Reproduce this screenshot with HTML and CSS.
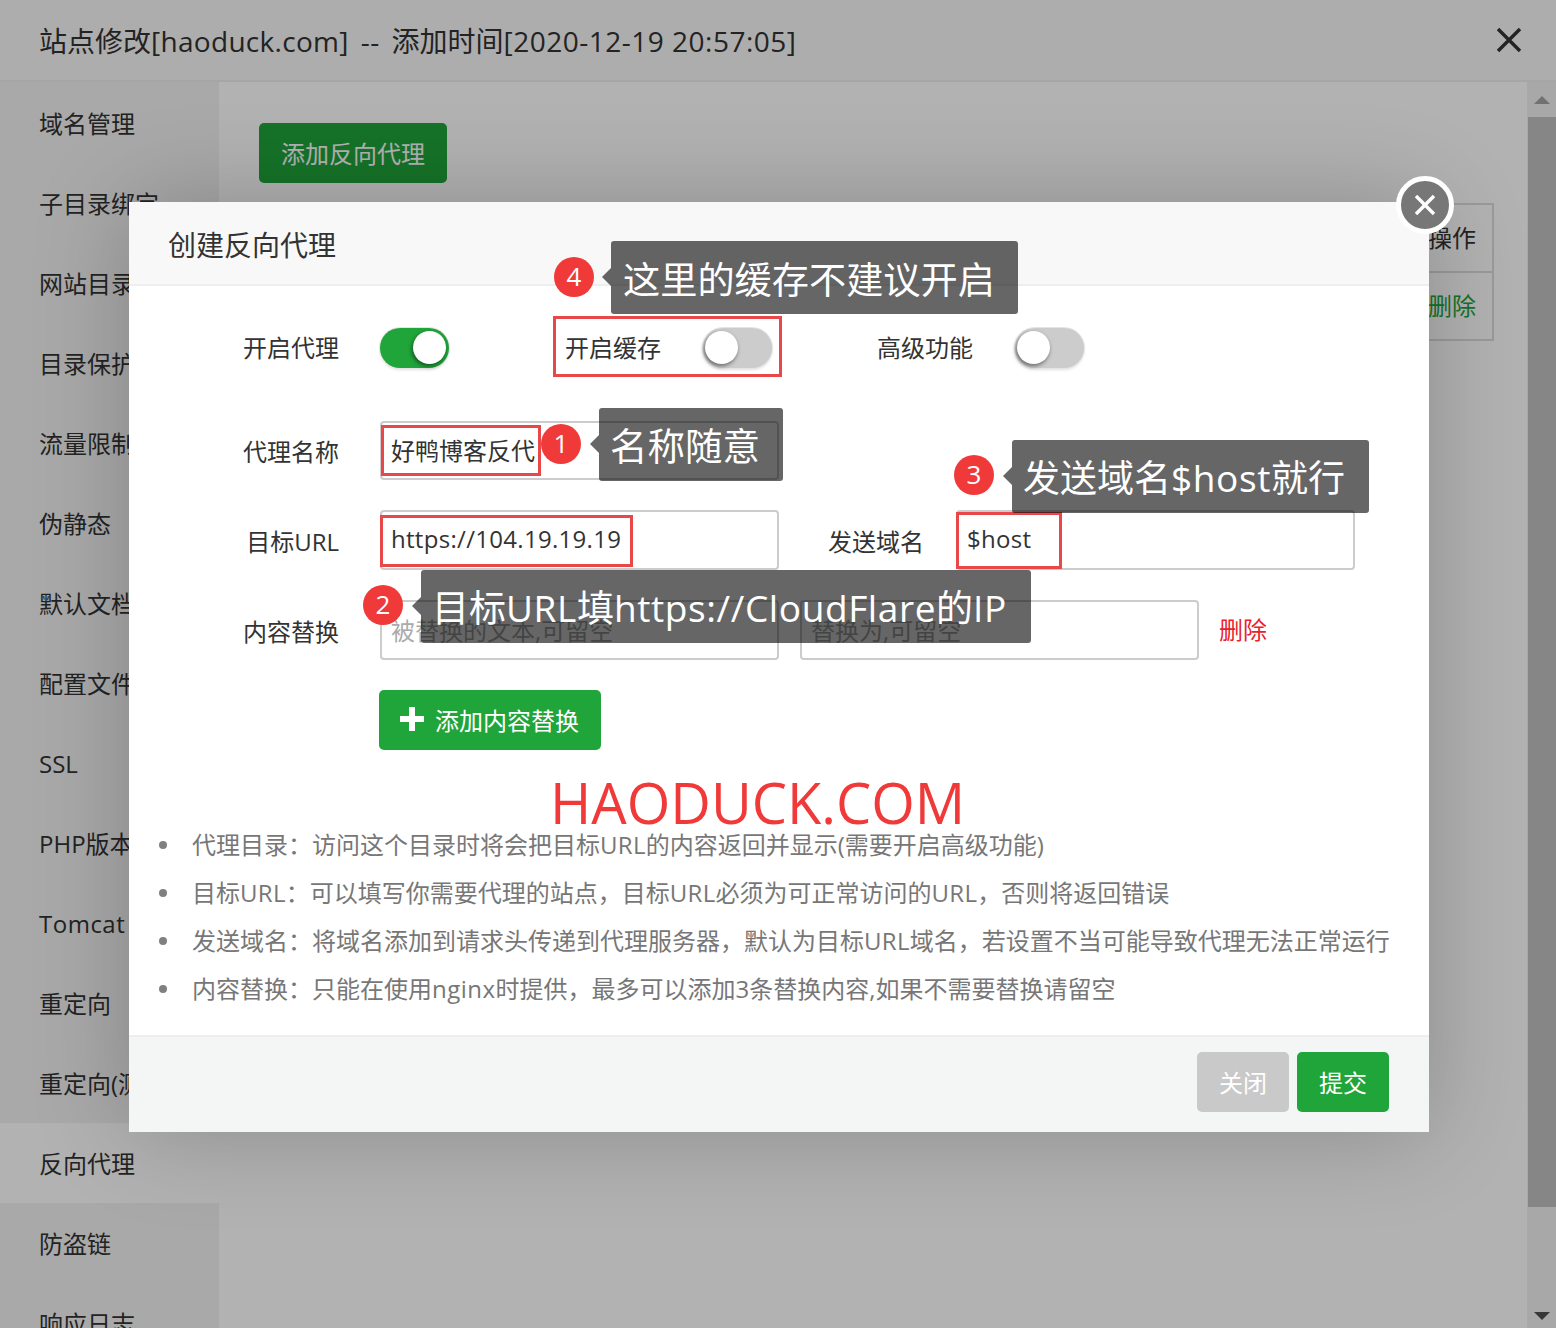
FILE: index.html
```html
<!DOCTYPE html>
<html lang="zh-CN">
<head>
    <meta charset="UTF-8">
    <title>创建反向代理</title>
    <link rel="stylesheet" href="styles.css">
</head>
<body>
    <div class="layer-title">
        <span>站点修改<span class="title-site">[haoduck.com] -- </span>添加时间<span class="latin-wide">[2020-12-19 20:57:05]</span></span>
        <svg class="layer-close" width="26" height="26" viewBox="0 0 26 26"><path d="M2 2 24 24M24 2 2 24" stroke="#333" stroke-width="3.4" fill="none"/></svg>
    </div>
    <div class="layer-body">
        <ul class="side-menu">
            <li>域名管理</li>
            <li>子目录绑定</li>
            <li>网站目录</li>
            <li>目录保护</li>
            <li>流量限制</li>
            <li>伪静态</li>
            <li>默认文档</li>
            <li>配置文件</li>
            <li>SSL</li>
            <li>PHP版本</li>
            <li class="latin-wide">Tomcat</li>
            <li>重定向</li>
            <li>重定向(测试)</li>
            <li class="on">反向代理</li>
            <li>防盗链</li>
            <li>响应日志</li>
        </ul>
        <div class="main">
            <button class="btn btn-green btn-add">添加反向代理</button>
            <table class="proxy-table">
                <tr><th>操作</th></tr>
                <tr><td class="link-green">删除</td></tr>
            </table>
        </div>
        <div class="scrollbar">
            <span class="arrow arrow-up"></span>
            <div class="thumb"></div>
            <span class="arrow arrow-down"></span>
        </div>
    </div>

    <div class="shade"></div>

    <div class="dialog">
        <div class="dialog-title">创建反向代理</div>
        <div class="dialog-content">
            <div class="row row-switches">
                <label class="row-label">开启代理</label>
                <span class="switch on"></span>
                <label class="label-cache">开启缓存</label>
                <span class="switch"></span>
                <label class="label-adv">高级功能</label>
                <span class="switch"></span>
            </div>
            <div class="row row-name">
                <label class="row-label">代理名称</label>
                <input class="txt txt-name" type="text" value="好鸭博客反代">
            </div>
            <div class="row">
                <label class="row-label">目标URL</label>
                <input class="txt latin" type="text" value="https://104.19.19.19">
                <label class="label-host">发送域名</label>
                <input class="txt latin" type="text" value="$host">
            </div>
            <div class="row">
                <label class="row-label">内容替换</label>
                <input class="txt txt-empty" type="text" placeholder="被替换的文本,可留空">
                <input class="txt txt-empty txt-second" type="text" placeholder="替换为,可留空">
                <a class="link-del">删除</a>
            </div>
            <div class="row">
                <button class="btn btn-green btn-plus">
                    <svg width="24" height="24" viewBox="0 0 24 24"><path d="M9 0h6v9h9v6h-9v9H9v-9H0V9h9z" fill="#fff"/></svg>
                    添加内容替换
                </button>
            </div>
            <ul class="help">
                <li>代理目录：访问这个目录时将会把目标<span class="latin">URL</span>的内容返回并显示(需要开启高级功能)</li>
                <li>目标<span class="latin">URL</span>：可以填写你需要代理的站点，目标<span class="latin">URL</span>必须为可正常访问的<span class="latin">URL</span>，否则将返回错误</li>
                <li>发送域名：将域名添加到请求头传递到代理服务器，默认为目标<span class="latin">URL</span>域名，若设置不当可能导致代理无法正常运行</li>
                <li>内容替换：只能在使用<span class="latin-wide">nginx</span>时提供，最多可以添加3条替换内容,如果不需要替换请留空</li>
            </ul>
        </div>
        <div class="dialog-foot">
            <button class="btn btn-gray">关闭</button>
            <button class="btn btn-green">提交</button>
        </div>
    </div>

    <div class="dialog-close">
        <svg width="22" height="22" viewBox="0 0 22 22"><path d="M2 2 20 20M20 2 2 20" stroke="#fff" stroke-width="3.4" fill="none"/></svg>
    </div>

    <!-- annotations drawn on top of the screenshot -->
    <div class="mark mark-cache"></div>
    <div class="mark mark-name"></div>
    <div class="mark mark-url"></div>
    <div class="mark mark-host"></div>

    <span class="badge badge-1">1</span>
    <span class="badge badge-2">2</span>
    <span class="badge badge-3">3</span>
    <span class="badge badge-4">4</span>

    <div class="tip tip-1">名称随意</div>
    <div class="tip tip-2">目标<span class="latin">URL</span>填<span class="latin">https://CloudFlare</span>的<span class="latin">IP</span></div>
    <div class="tip tip-3">发送域名<span class="latin">$host</span>就行</div>
    <div class="tip tip-4">这里的缓存不建议开启</div>

    <div class="watermark">HAODUCK.COM</div>
</body>
</html>
```

FILE: styles.css
```css
* {
    box-sizing: border-box;
}
html, body {
    height: 100%;
}
body {
    margin: 0;
    height: 1328px;
    overflow: hidden;
    position: relative;
    display: flex;
    flex-direction: column;
    background: #fff;
    color: #333;
    font-family: "Open Sans", "Noto Sans CJK SC", sans-serif;
    font-size: 24px;
}
ul {
    margin: 0;
    padding: 0;
    list-style: none;
}
.latin {
    letter-spacing: 0.3px;
}
.latin-wide {
    letter-spacing: 0.5px;
}
.layer-title {
    height: 82px;
    flex: none;
    display: flex;
    align-items: center;
    justify-content: space-between;
    padding: 0 34px 0 39px;
    background: #f8f8f8;
    border-bottom: 2px solid #eee;
    font-size: 28px;
}
.title-site {
    letter-spacing: 0.3px;
    word-spacing: 4.5px;
}
.layer-body {
    flex: 1;
    display: flex;
    min-height: 0;
}
.side-menu {
    width: 219px;
    flex: none;
    padding-top: 1px;
    background: #f2f2f2;
    overflow: hidden;
}
.side-menu li {
    height: 80px;
    line-height: 82px;
    padding-left: 39px;
    white-space: nowrap;
}
.side-menu li.on {
    background: #fff;
}
.main {
    flex: 1;
    padding: 41px 33px 0 40px;
    background: #fff;
}
.btn {
    height: 60px;
    padding: 0 21px 2px;
    border: none;
    border-radius: 5px;
    color: #fff;
    font: inherit;
}
.btn-green {
    background: #20a53a;
}
.btn-gray {
    background: #c9c9c9;
}
.btn-add {
    display: block;
    width: 188px;
    padding: 0 0 2px;
}
.proxy-table {
    width: 100%;
    margin-top: 20px;
    border-collapse: collapse;
    border: 2px solid #ddd;
}
.proxy-table th, .proxy-table td {
    height: 68px;
    padding: 0 16px 3px;
    text-align: right;
    font-weight: normal;
    border-bottom: 2px solid #ddd;
}
.link-green {
    color: #20a53a;
}
.scrollbar {
    width: 29px;
    flex: none;
    display: flex;
    flex-direction: column;
    align-items: center;
    background: #f1f1f1;
}
.thumb {
    width: 28px;
    height: 1090px;
    margin: 13px 0 0 1px;
    background: #c1c1c1;
}
.arrow {
    width: 0;
    height: 0;
    border-left: 8px solid transparent;
    border-right: 8px solid transparent;
}
.arrow-up {
    margin-top: 14px;
    border-bottom: 8px solid #a3a3a3;
}
.arrow-down {
    margin-top: 105px;
    border-top: 8px solid #505050;
}
.shade {
    position: absolute;
    inset: 0;
    background: rgba(0, 0, 0, 0.3);
}
.dialog {
    position: absolute;
    left: 129px;
    top: 202px;
    width: 1300px;
    height: 930px;
    display: flex;
    flex-direction: column;
    background: #fff;
    box-shadow: 0 0 90px rgba(0, 0, 0, 0.22);
}
.dialog-title {
    height: 84px;
    flex: none;
    padding-left: 39px;
    line-height: 86px;
    font-size: 28px;
    background: #f8f8f8;
    border-bottom: 2px solid #eee;
}
.dialog-content {
    flex: 1;
    padding-top: 42px;
}
.row {
    display: flex;
    align-items: center;
    min-height: 40px;
    margin-bottom: 30px;
    padding-left: 250px;
}
.row-name {
    margin-top: 53px;
}
.row-switches label, .link-del {
    padding-bottom: 3px;
}
.row-label {
    width: 210px;
    margin-left: -250px;
    margin-right: 41px;
    text-align: right;
}
.label-cache {
    margin-left: 116px;
    margin-right: 42px;
}
.label-adv {
    margin-left: 105px;
    margin-right: 42px;
}
.label-host {
    margin-left: 49px;
    margin-right: 32px;
}
.switch {
    position: relative;
    width: 69px;
    height: 40px;
    border-radius: 20px;
    background: #ccc;
    box-shadow: 0 0 0 1px #e4e4e4, 0 2px 3px rgba(0, 0, 0, 0.12);
}
.switch::after {
    content: "";
    position: absolute;
    left: 2px;
    top: 3px;
    width: 33px;
    height: 33px;
    border-radius: 50%;
    background: #fff;
    box-shadow: -1px 2px 4px rgba(0, 0, 0, 0.5);
}
.switch.on {
    background: #20a53a;
}
.switch.on::after {
    left: auto;
    right: 3px;
}
.txt {
    width: 399px;
    height: 60px;
    padding: 0 9px 3px;
    border: 2px solid #ccc;
    border-radius: 4px;
    color: #333;
    font: inherit;
    outline: none;
}
.txt-name {
    height: 59px;
}
.txt-empty {
    padding-bottom: 0;
}
.txt::placeholder {
    color: #aaa;
}
.txt-second {
    margin-left: 21px;
}
.link-del {
    margin-left: 20px;
    color: #e8222b;
}
.btn-plus {
    display: flex;
    align-items: center;
    gap: 11px;
    width: 222px;
    font-size: 24px;
}
.help {
    margin-top: 71px;
    padding-left: 63px;
    color: #777;
    line-height: 48px;
    white-space: nowrap;
}
.help li {
    position: relative;
}
.help li::before {
    content: "";
    position: absolute;
    left: -33px;
    top: 20px;
    width: 8px;
    height: 8px;
    border-radius: 50%;
    background: #808080;
}
.dialog-foot {
    height: 97px;
    flex: none;
    display: flex;
    justify-content: flex-end;
    gap: 8px;
    padding: 15px 40px 0 0;
    background: #f4f5f5;
    border-top: 2px solid #eee;
}
.dialog-foot .btn {
    width: 92px;
    padding: 0 0 2px;
}
.dialog-close {
    position: absolute;
    left: 1396px;
    top: 176px;
    width: 58px;
    height: 58px;
    display: flex;
    align-items: center;
    justify-content: center;
    border: 5px solid #fff;
    border-radius: 50%;
    background: #777;
}
.mark {
    position: absolute;
    border: 3px solid #e8484a;
}
.mark-cache {
    left: 553px;
    top: 316px;
    width: 229px;
    height: 61px;
}
.mark-name {
    left: 381px;
    top: 425px;
    width: 160px;
    height: 51px;
}
.mark-url {
    left: 380px;
    top: 515px;
    width: 253px;
    height: 52px;
}
.mark-host {
    left: 956px;
    top: 512px;
    width: 106px;
    height: 57px;
}
.badge {
    position: absolute;
    width: 40px;
    height: 40px;
    border-radius: 50%;
    background: #f03a3a;
    color: #fff;
    text-align: center;
    line-height: 38px;
    font-size: 26px;
}
.badge-1 { left: 541px; top: 424px; }
.badge-2 { left: 363px; top: 585px; }
.badge-3 { left: 954px; top: 455px; }
.badge-4 { left: 554px; top: 257px; }
.tip {
    position: absolute;
    height: 73px;
    padding-left: 11px;
    border-radius: 3px;
    background: rgba(0, 0, 0, 0.6);
    color: #fff;
    font-size: 37px;
    line-height: 76px;
    white-space: nowrap;
}
.tip .latin {
    letter-spacing: 0.6px;
}
.tip::before {
    content: "";
    position: absolute;
    left: -9px;
    top: 27px;
    border-top: 9px solid transparent;
    border-bottom: 9px solid transparent;
    border-right: 9px solid rgba(0, 0, 0, 0.6);
}
.tip-1 { left: 599px; top: 408px; width: 184px; font-size: 37.5px; }
.tip-2 { left: 421px; top: 570px; width: 610px; }
.tip-3 { left: 1012px; top: 440px; width: 357px; }
.tip-4 { left: 611px; top: 241px; width: 407px; padding-left: 12px; font-size: 37.2px; line-height: 77px; }
.watermark {
    position: absolute;
    left: 550px;
    top: 763px;
    color: #f03a3a;
    font-size: 56px;
    line-height: 78px;
    white-space: nowrap;
}
```
